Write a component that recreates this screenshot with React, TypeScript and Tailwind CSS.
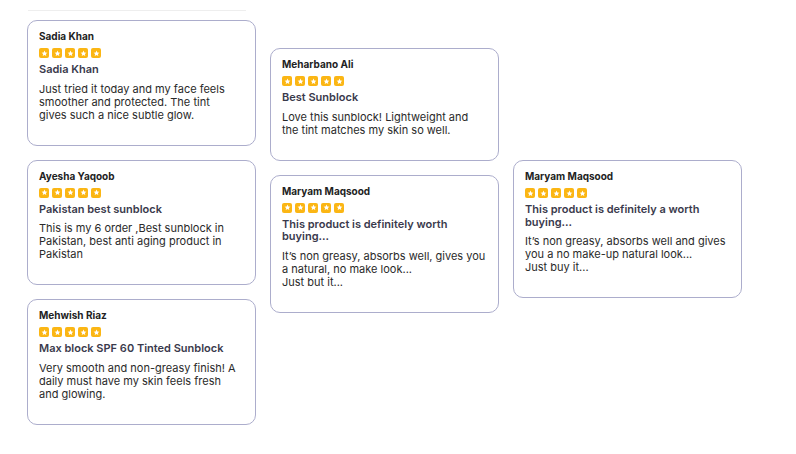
import React from 'react'

type Review = { name: string; title: string; body: string[] }

// Lines are split the way the original (Poppins) wraps them
const COLUMNS: { offset: string; items: Review[] }[] = [
  {
    offset: 'mt-0',
    items: [
      {
        name: 'Sadia Khan',
        title: 'Sadia Khan',
        body: ['Just tried it today and my face feels', 'smoother and protected. The tint', 'gives such a nice subtle glow.'],
      },
      {
        name: 'Ayesha Yaqoob',
        title: 'Pakistan best sunblock',
        body: ['This is my 6 order ,Best sunblock in', 'Pakistan, best anti aging product in', 'Pakistan'],
      },
      {
        name: 'Mehwish Riaz',
        title: 'Max block SPF 60 Tinted Sunblock',
        body: ['Very smooth and non-greasy finish! A', 'daily must have my skin feels fresh', 'and glowing.'],
      },
    ],
  },
  {
    offset: 'mt-[28px]',
    items: [
      {
        name: 'Meharbano Ali',
        title: 'Best Sunblock',
        body: ['Love this sunblock! Lightweight and', 'the tint matches my skin so well.'],
      },
      {
        name: 'Maryam Maqsood',
        title: 'This product is definitely worth buying...',
        body: ['It\u2019s non greasy, absorbs well, gives you', 'a natural, no make look...', 'Just but it...'],
      },
    ],
  },
  {
    offset: 'mt-[140px]',
    items: [
      {
        name: 'Maryam Maqsood',
        title: 'This product is definitely a worth buying...',
        body: ['It\u2019s non greasy, absorbs well and gives', 'you a no make-up natural look...', 'Just buy it...'],
      },
    ],
  },
]

function Stars() {
  return (
    <div className="flex gap-[3px]">
      {[0, 1, 2, 3, 4].map((i) => (
        <span key={i} className="w-[10px] h-[10px] rounded-[2px] bg-[#fbb614] flex items-center justify-center">
          <svg viewBox="0 0 24 24" className="w-[7px] h-[7px]" fill="#ffffff">
            <path d="M12 2l2.9 6.6 7.1.6-5.4 4.7 1.6 7-6.2-3.7-6.2 3.7 1.6-7L2 9.2l7.1-.6z" />
          </svg>
        </span>
      ))}
    </div>
  )
}

function ReviewCard({ review }: { review: Review }) {
  return (
    <div className="w-[229px] rounded-[10px] border border-[#acadcc] bg-white pl-[11px] pr-[8px] pt-[9px] pb-[23px]">
      <div className="text-[10px] leading-[12px] font-bold text-[#222222]">{review.name}</div>
      <div className="mt-[6px]">
        <Stars />
      </div>
      <div className="mt-[5px] pr-[3px] text-[11px] leading-[12.65px] font-semibold text-[#3a3a4c]">{review.title}</div>
      <p className="mt-[7px] text-[11px] leading-[13px] text-[#2a2a2a]">
        {review.body.map((line, i) => (
          <span key={i} className="block whitespace-nowrap">
            {line}
          </span>
        ))}
      </p>
    </div>
  )
}

export default function App() {
  return (
    <div className="min-h-[454px] bg-white font-['Inter',sans-serif]">
      <div className="pt-[10px] pl-[28px]">
        <div className="w-[218px] h-px bg-[#eeeeee]" />
      </div>
      <div className="flex gap-[14px] pl-[27px] pt-[9px]">
        {COLUMNS.map((col, ci) => (
          <div key={ci} className={`flex flex-col gap-[14px] ${col.offset}`}>
            {col.items.map((r, ri) => (
              <ReviewCard key={ri} review={r} />
            ))}
          </div>
        ))}
      </div>
    </div>
  )
}
